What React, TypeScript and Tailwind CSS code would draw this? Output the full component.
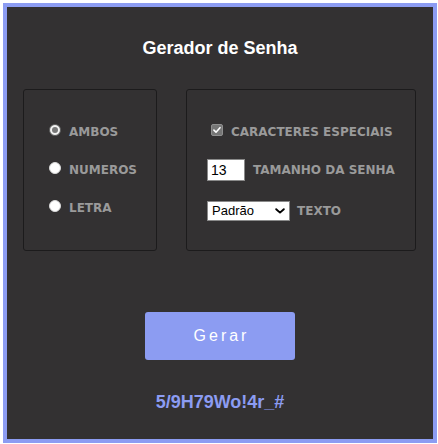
import React from "react";

const labelFont = { fontFamily: '"DejaVu Sans", Verdana, sans-serif' };
const arial = { fontFamily: '"Liberation Sans", Arial, sans-serif' };

function Radio({ checked }: { checked?: boolean }) {
  return checked ? (
    <span className="flex h-[12px] w-[12px] shrink-0 items-center justify-center rounded-full border border-[#5a5a5a] bg-[#f2f2f2]">
      <span className="h-[6px] w-[6px] rounded-full bg-[#777777]" />
    </span>
  ) : (
    <span className="h-[12px] w-[12px] shrink-0 rounded-full border border-[#d9d9d9] bg-white" />
  );
}

function RadioRow({ label, checked, className }: { label: string; checked?: boolean; className?: string }) {
  return (
    <div className={"flex items-start gap-[8px] " + (className ?? "")}>
      <Radio checked={checked} />
      <span className="mt-[1px] text-[12px] font-bold leading-[14px] text-[#9a9a9a]" style={labelFont}>
        {label}
      </span>
    </div>
  );
}

export default function App() {
  return (
    <div className="min-h-[444px] w-[438px] bg-white pl-[3px] pt-[3px]">
      <div className="flex h-[440px] w-[434px] flex-col items-center border-4 border-[#8c9cf2] bg-[#333132] pt-[31px]">
        <h1 className="text-[18px] font-bold leading-[20px] text-white" style={arial}>
          Gerador de Senha
        </h1>

        <div className="mt-[31px] flex w-full gap-[29px] pl-[16px]">
          {/* Tipo */}
          <div className="h-[162px] w-[134px] rounded-[3px] border border-[#1c1b1c] pl-[25px] pt-[34px]">
            <RadioRow label="AMBOS" checked />
            <RadioRow label="NUMEROS" className="mt-[23px]" />
            <RadioRow label="LETRA" className="mt-[23px]" />
          </div>

          {/* Opções */}
          <div className="h-[162px] w-[230px] rounded-[3px] border border-[#1c1b1c] pl-[20px] pt-[34px]">
            <div className="flex items-start gap-[8px] pl-[4px]">
              <span className="flex h-[12px] w-[12px] shrink-0 items-center justify-center rounded-[2px] border border-[#8f8f8f] bg-[#767676]">
                <svg viewBox="0 0 12 12" className="h-[10px] w-[10px]">
                  <path d="M2.3 6.2 L4.8 8.6 L9.6 3.2" fill="none" stroke="white" strokeWidth="1.9" strokeLinecap="round" strokeLinejoin="round" />
                </svg>
              </span>
              <span className="mt-[1px] text-[12px] font-bold leading-[14px] text-[#9a9a9a]" style={labelFont}>
                CARACTERES ESPECIAIS
              </span>
            </div>

            <div className="mt-[20px] flex items-center gap-[8px]">
              <div
                className="flex h-[22px] w-[38px] items-center border border-[#8a8a8a] bg-white pl-[3px] text-[14px] text-black"
                style={arial}
              >
                13
              </div>
              <span className="text-[12px] font-bold leading-[14px] text-[#9a9a9a]" style={labelFont}>
                TAMANHO DA SENHA
              </span>
            </div>

            <div className="mt-[20px] flex items-center gap-[7px]">
              <div
                className="flex h-[20px] w-[83px] items-center justify-between border border-[#8a8a8a] bg-white pl-[4px] pr-[4px] text-[13px] text-black"
                style={arial}
              >
                <span>Padrão</span>
                <svg viewBox="0 0 10 6" className="h-[6px] w-[10px]">
                  <path d="M1.2 1.2 L5 4.6 L8.8 1.2" fill="none" stroke="black" strokeWidth="1.9" strokeLinecap="round" strokeLinejoin="round" />
                </svg>
              </div>
              <span className="text-[12px] font-bold leading-[14px] text-[#9a9a9a]" style={labelFont}>
                TEXTO
              </span>
            </div>
          </div>
        </div>

        <button
          type="button"
          className="mt-[61px] h-[48px] w-[150px] rounded-[3px] bg-[#8c9cf2] pl-[3px] text-[16px] tracking-[3px] text-white"
          style={arial}
        >
          Gerar
        </button>

        <p className="mt-[32px] text-[18px] font-bold leading-[20px] text-[#8c9cf2]" style={arial}>
          5/9H79Wo!4r_#
        </p>
      </div>
    </div>
  );
}
